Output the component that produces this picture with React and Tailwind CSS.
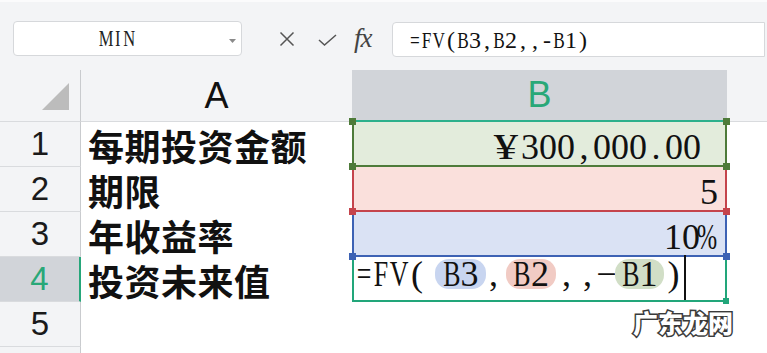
import React from "react";

const isNarrow = (c) => /[A-Z=]/.test(c);

const Glyph = ({ c }) =>
  isNarrow(c) ? <span className="inline-block scale-x-[0.72]">{c}</span> : c;

const Chars = ({ text }) =>
  text.split("").map((c, i) => (
    <span key={i} className="inline-flex w-[0.5em] justify-center">
      <Glyph c={c} />
    </span>
  ));

function Handle({ pos, color }) {
  const cls = {
    tl: "left-[-5px] top-[-4px]",
    tr: "right-[-5px] top-[-4px]",
    bl: "left-[-5px] bottom-[-5px]",
    br: "right-[-5px] bottom-[-5px]",
  }[pos];
  return <div className={"absolute z-10 w-[7px] h-[7px] " + cls} style={{ background: color }} />;
}

function Token({ w, children, align = "center" }) {
  const a = align === "left" ? "justify-start pl-[3px]" : "justify-center";
  return (
    <span className={"h-[30px] flex items-center shrink-0 " + a} style={{ width: w }}>
      <Glyph c={children} />
    </span>
  );
}

function Pill({ w, bg, children }) {
  return (
    <span className="h-[30px] flex items-center justify-center shrink-0 rounded-[14px]" style={{ width: w, background: bg }}>
      <Chars text={children} />
    </span>
  );
}

export default function App() {
  const rowHead = "bg-[#f3f4f6] border-r border-b border-r-[#c9cbce] border-b-[#d9dbde] flex items-center justify-center text-[33px] text-[#1a1a1a] font-['Liberation_Sans',sans-serif]";
  const colA = "bg-white flex items-center pl-[7px] text-[36px] font-bold text-[#111] tracking-[0.5px] font-['Noto_Sans_CJK_SC',sans-serif] leading-none";
  const serif = "font-['Liberation_Serif',serif] text-[36px] leading-none text-[#111]";
  return (
    <div className="w-[767px] h-[353px] overflow-hidden bg-white relative">
      {/* toolbar */}
      <div className="h-[70px] bg-[#f3f4f6] border-t-2 border-t-[#fbfbfc] flex items-start pt-[19px]">
        <div className="ml-[13px] w-[229px] h-[35px] bg-white border border-[#d6d8db] rounded-[4px] relative flex items-center justify-center">
          <span className="font-['Liberation_Serif',serif] text-[23px] text-[#222] mr-[20px] leading-none">
            <Chars text="MIN" />
          </span>
          <svg className="absolute right-[5px] top-[17px]" width="7" height="4" viewBox="0 0 7 4">
            <path d="M0 0 L7 0 L3.5 4 Z" fill="#8a8a8a" />
          </svg>
        </div>
        <div className="w-[150px] h-[35px] flex items-center">
          <svg className="ml-[37px]" width="16" height="16" viewBox="0 0 16 16">
            <path d="M1.5 1.5 L14.5 14.5 M14.5 1.5 L1.5 14.5" stroke="#555" strokeWidth="1.5" fill="none" />
          </svg>
          <svg className="ml-[23px] mt-[3px]" width="19" height="12" viewBox="0 0 19 12">
            <path d="M1 6 L6.5 11 L18 1" stroke="#555" strokeWidth="1.5" fill="none" />
          </svg>
          <span className="ml-[17px] font-['Liberation_Serif',serif] italic text-[27px] text-[#444] leading-none tracking-[-1px]">fx</span>
        </div>
        <div className="w-[373px] h-[35px] mt-[1px] bg-white border border-[#d6d8db] rounded-l-[4px] flex items-center pl-[16px]">
          <span className="font-['Liberation_Serif',serif] text-[24px] text-[#111] leading-none">
            <Chars text="=FV(B3,B2,,-B1)" />
          </span>
        </div>
      </div>

      {/* grid */}
      <div className="grid grid-cols-[81px_271px_375px_40px] grid-rows-[52px_45px_45px_45px_45px_45px_45px]">
        {/* header row */}
        <div className="bg-[#f3f4f6] border-r border-b border-r-[#c9cbce] border-b-[#d9dbde] flex items-end justify-end pr-[11px] pb-[11px]">
          <svg width="27" height="27" viewBox="0 0 27 27">
            <path d="M27 0 L27 27 L0 27 Z" fill="#bcbcbc" />
          </svg>
        </div>
        <div className="bg-[#f3f4f6] border-b border-b-[#d9dbde] flex items-center justify-center text-[36px] text-[#111] font-['Liberation_Sans',sans-serif]">A</div>
        <div className="bg-[#d1d4d9] border-b-2 border-b-[#2db08c] flex items-center justify-center text-[36px] text-[#29a878] font-['Liberation_Sans',sans-serif]">B</div>
        <div className="bg-[#f3f4f6] border-b border-b-[#d9dbde]"></div>

        {/* row 1 */}
        <div className={rowHead}>1</div>
        <div className={colA}>每期投资金额</div>
        <div className="relative bg-[#e3ecdc] border-x-2 border-b-2 border-[#4e7b3a] flex items-end justify-end pr-[24px]">
          <span className={serif + " flex"}>
            <span className="inline-flex w-[30px] justify-center">
              <span className="inline-block scale-x-[1.35]">¥</span>
            </span>
            <Chars text="300,000.00" />
          </span>
          <Handle pos="tl" color="#4e7b3a" />
          <Handle pos="tr" color="#4e7b3a" />
          <Handle pos="bl" color="#4e7b3a" />
          <Handle pos="br" color="#4e7b3a" />
        </div>
        <div className="bg-white"></div>

        {/* row 2 */}
        <div className={rowHead}>2</div>
        <div className={colA}>期限</div>
        <div className="relative bg-[#fae0dc] border-x-2 border-b-2 border-[#c5444c] flex items-end justify-end pr-[7px]">
          <span className={serif}>
            <Chars text="5" />
          </span>
          <Handle pos="bl" color="#c5444c" />
          <Handle pos="br" color="#c5444c" />
        </div>
        <div className="bg-white"></div>

        {/* row 3 */}
        <div className={rowHead}>3</div>
        <div className={colA}>年收益率</div>
        <div className="relative bg-[#dae2f4] border-x-2 border-b-2 border-[#3d62b4] flex items-end justify-end pr-[7px]">
          <span className={serif + " flex"}>
            <Chars text="10" />
            <span className="inline-flex w-[0.5em] justify-center">
              <span className="inline-block scale-x-[0.68] translate-x-[-2px]">%</span>
            </span>
          </span>
          <Handle pos="bl" color="#3d62b4" />
          <Handle pos="br" color="#3d62b4" />
        </div>
        <div className="bg-white"></div>

        {/* row 4 */}
        <div className="bg-[#d1d4d9] border-r-2 border-b border-r-[#26a67a] border-b-[#d9dbde] flex items-center justify-center text-[33px] text-[#29a878] font-['Liberation_Sans',sans-serif]">4</div>
        <div className={colA}>投资未来值</div>
        <div className="relative bg-white border-x-2 border-b-2 border-[#22a67a] flex items-stretch pl-[1px]">
          <div className={"flex items-start pt-[2px] " + serif}>
            <Token w={18}>=</Token>
            <Token w={17}>F</Token>
            <Token w={18}>V</Token>
            <Token w={27} align="left">(</Token>
            <Pill w={51} bg="#c8d5f0">B3</Pill>
            <Token w={20} align="left">,</Token>
            <Pill w={50} bg="#f1cbc4">B2</Pill>
            <Token w={21}>,</Token>
            <Token w={21}>,</Token>
            <Token w={17}>−</Token>
            <Pill w={49} bg="#d1dec6">B1</Pill>
            <Token w={19}>)</Token>
          </div>
          <div className="w-[2px] bg-[#111] ml-[1px] mt-[-2px]"></div>
          <div className="absolute z-10 w-[6px] h-[6px] right-[-4px] bottom-[-4px] bg-[#22a67a]" />
        </div>
        <div className="bg-white"></div>

        {/* row 5 */}
        <div className={rowHead}>5</div>
        <div className="bg-white"></div>
        <div className="bg-white"></div>
        <div className="bg-white"></div>

        {/* row 6 */}
        <div className={rowHead}></div>
        <div className="bg-white"></div>
        <div className="bg-white"></div>
        <div className="bg-white"></div>
      </div>

      <div className="absolute left-[633px] top-[310px] text-[25px] font-black text-white [-webkit-text-stroke:3px_#3a3a3a] [paint-order:stroke_fill] font-['Noto_Sans_CJK_SC',sans-serif] leading-none">
        广东龙网
      </div>
    </div>
  );
}
